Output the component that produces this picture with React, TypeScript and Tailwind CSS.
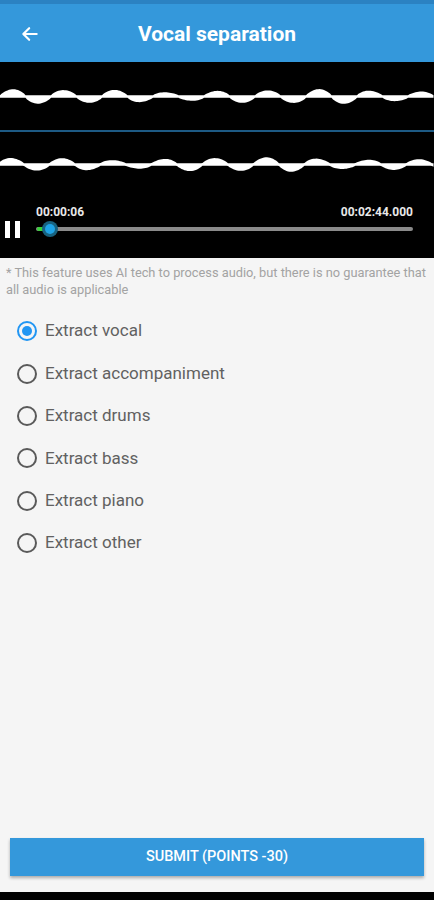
import React from "react";

function wavePath(width: number, c: number, period: number, phase: number, seed: number) {
  const top: string[] = [];
  const bot: string[] = [];
  for (let x = 0; x <= width; x += 1.5) {
    const amp = 4.6 + 1.2 * Math.sin(x / 41 + seed) + 0.7 * Math.sin(x / 17 + seed * 2);
    const raw = Math.sin((2 * Math.PI * x) / period + phase);
    const shaped = Math.sign(raw) * Math.pow(Math.abs(raw), 0.8);
    const s = amp * shaped;
    const t = c - Math.max(s, 0) - 1.3;
    const b = c + Math.max(-s, 0) + 1.3;
    top.push(`${x},${t.toFixed(2)}`);
    bot.unshift(`${x},${b.toFixed(2)}`);
  }
  return `M${top.join(" L")} L${bot.join(" L")} Z`;
}

const W1 = wavePath(434, 34.5, 51, 0, 0.3);
const W2 = wavePath(434, 32.5, 51, 0.2, 1.7);

const options = [
  "Extract vocal",
  "Extract accompaniment",
  "Extract drums",
  "Extract bass",
  "Extract piano",
  "Extract other",
];

export default function App() {
  return (
    <div
      className="flex h-[900px] w-[434px] flex-col overflow-hidden bg-[#f5f5f5]"
      style={{ fontFamily: "Roboto, 'Noto Sans', sans-serif" }}
    >
      <div className="h-[4px] bg-[#2b82c2]" />
      <div className="relative flex h-[58px] items-center justify-center bg-[#3498db]">
        <svg
          className="absolute left-[20px] top-[20px]"
          width="20"
          height="20"
          viewBox="0 0 24 24"
          fill="none"
          stroke="white"
          strokeWidth="2.6"
          strokeLinecap="round"
          strokeLinejoin="round"
        >
          <path d="M20 12H5M11 5l-7 7 7 7" />
        </svg>
        <span className="mt-[4px] text-[21px] font-bold text-white">Vocal separation</span>
      </div>
      <div className="flex h-[196px] flex-col bg-black">
        <svg width="434" height="68" viewBox="0 0 434 68" className="block">
          <path d={W1} fill="white" />
        </svg>
        <div className="h-[2px] bg-[#1d5a84]" />
        <svg width="434" height="66" viewBox="0 0 434 66" className="block">
          <path d={W2} fill="white" />
        </svg>
        <div className="flex flex-1">
          <div className="flex w-[36px] items-end gap-[5px] pb-[20px] pl-[5px]">
            <div className="h-[17px] w-[5px] bg-white" />
            <div className="h-[17px] w-[5px] bg-white" />
          </div>
          <div className="flex flex-1 flex-col pr-[21px] pt-[7px]">
            <div className="flex justify-between text-[12px] font-bold leading-[14px] text-[#e8e8e8]">
              <span>00:00:06</span>
              <span>00:02:44.000</span>
            </div>
            <div className="relative mt-[2px] flex h-[16px] items-center">
              <div className="h-[4px] flex-1 rounded-full bg-[#8a8a8a]" />
              <div className="absolute left-[1px] top-[6px] h-[4px] w-[8px] rounded-full bg-[#38d13a]" />
              <div className="absolute left-[6px] top-0 flex h-[16px] w-[16px] items-center justify-center rounded-full bg-[#18627f]">
                <div className="h-[10px] w-[10px] rounded-full bg-[#1ea3e6]" />
              </div>
            </div>
          </div>
        </div>
      </div>
      <div className="flex flex-1 flex-col">
        <p className="pl-[6px] pr-[3px] pt-[6px] text-[12.8px] leading-[17px] text-[#a3a3a3]">
          * This feature uses AI tech to process audio, but there is no guarantee that all audio is applicable
        </p>
        <div className="mt-[12px] flex flex-col">
          {options.map((o, i) => (
            <div key={o} className="flex h-[42.4px] items-center pl-[17px]">
              {i === 0 ? (
                <div className="flex h-[20px] w-[20px] items-center justify-center rounded-full border-[2px] border-[#2196f3]">
                  <div className="h-[10px] w-[10px] rounded-full bg-[#2196f3]" />
                </div>
              ) : (
                <div className="h-[20px] w-[20px] rounded-full border-[2px] border-[#5a5a5a]" />
              )}
              <span className="ml-[8px] text-[17px] text-[#616161]">{o}</span>
            </div>
          ))}
        </div>
      </div>
      <div className="px-[10px] pb-[16px]">
        <div className="flex h-[38px] items-center justify-center bg-[#3498db] shadow-[0_2px_3px_rgba(0,0,0,0.3)]">
          <span className="text-[14.5px] font-medium text-white">SUBMIT (POINTS -30)</span>
        </div>
      </div>
      <div className="h-[8px] bg-black" />
    </div>
  );
}
